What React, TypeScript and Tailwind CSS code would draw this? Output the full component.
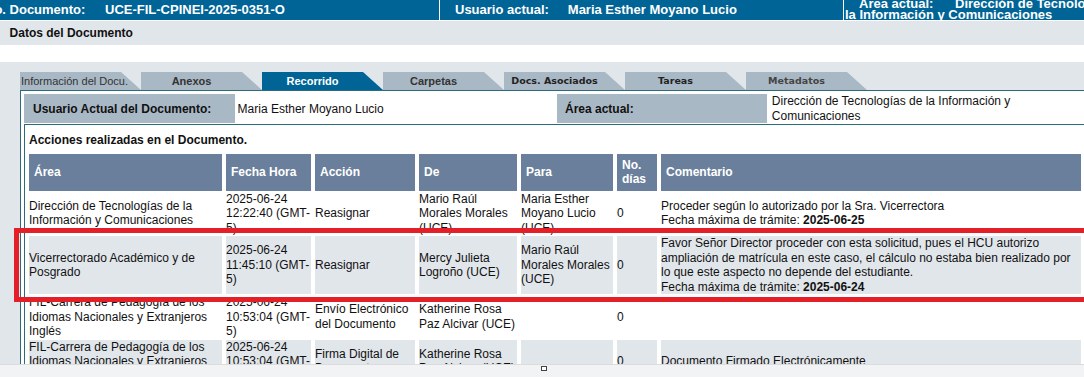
import React from 'react';

interface Accion {
  area: string;
  fecha: string;
  accion: string;
  de: string;
  para: string;
  dias: string;
  comentario?: string;
  fechaMax?: string;
  gris?: boolean;
}

const acciones: Accion[] = [
  {
    area: 'Dirección de Tecnologías de la Información y Comunicaciones',
    fecha: '2025-06-24 12:22:40 (GMT-5)',
    accion: 'Reasignar',
    de: 'Mario Raúl Morales Morales (UCE)',
    para: 'Maria Esther Moyano Lucio (UCE)',
    dias: '0',
    comentario: 'Proceder según lo autorizado por la Sra. Vicerrectora',
    fechaMax: '2025-06-25',
  },
  {
    area: 'Vicerrectorado Académico y de Posgrado',
    fecha: '2025-06-24 11:45:10 (GMT-5)',
    accion: 'Reasignar',
    de: 'Mercy Julieta Logroño (UCE)',
    para: 'Mario Raúl Morales Morales (UCE)',
    dias: '0',
    comentario:
      'Favor Señor Director proceder con esta solicitud, pues el HCU autorizo ampliación de matrícula en este caso, el cálculo no estaba bien realizado por lo que este aspecto no depende del estudiante.',
    fechaMax: '2025-06-24',
    gris: true,
  },
  {
    area: 'FIL-Carrera de Pedagogía de los Idiomas Nacionales y Extranjeros Inglés',
    fecha: '2025-06-24 10:53:04 (GMT-5)',
    accion: 'Envío Electrónico del Documento',
    de: 'Katherine Rosa Paz Alcivar (UCE)',
    para: '',
    dias: '0',
  },
  {
    area: 'FIL-Carrera de Pedagogía de los Idiomas Nacionales y Extranjeros Inglés',
    fecha: '2025-06-24 10:53:04 (GMT-5)',
    accion: 'Firma Digital de Documento',
    de: 'Katherine Rosa Paz Alcivar (UCE)',
    para: '',
    dias: '0',
    comentario: 'Documento Firmado Electrónicamente',
    gris: true,
  },
];

const tabs = [
  { label: 'Información del Docu.', kind: 'first' },
  { label: 'Anexos', kind: 'arial' },
  { label: 'Recorrido', kind: 'active' },
  { label: 'Carpetas', kind: 'arial' },
  { label: 'Docs. Asociados', kind: 'verdana' },
  { label: 'Tareas', kind: 'verdana' },
  { label: 'Metadatos', kind: 'muted' },
];

function Tab({ label, kind }: { label: string; kind: string }) {
  const bg = kind === 'active' ? 'bg-[#006496]' : 'bg-[#a9b8c5]';
  let text = 'w-[101px] text-center text-[11px] font-bold text-[#333]';
  if (kind === 'first') text = 'pl-[1px] text-[11px] text-[#333] whitespace-nowrap';
  if (kind === 'active') text = 'w-[101px] text-center text-[11px] font-bold text-white';
  if (kind === 'verdana') text = "w-[101px] text-center whitespace-nowrap font-['DejaVu_Sans',Verdana,sans-serif] text-[9.5px] font-bold text-[#222]";
  if (kind === 'muted') text = "w-[101px] text-center font-['DejaVu_Sans',Verdana,sans-serif] text-[9.5px] font-bold text-[#444]";

  return (
    <div className="relative flex h-[18px] w-[121px] shrink-0 items-center">
      {/* sloped tab shape */}
      <div className={`absolute inset-0 ${bg} [clip-path:polygon(0_0,101px_0,121px_100%,0_100%)]`} />
      <span className={`relative ${text}`}>{label}</span>
    </div>
  );
}

export default function App() {
  return (
    <div className="relative h-[377px] w-[1084px] overflow-hidden bg-white font-['Liberation_Sans',Arial,sans-serif] text-[12px] text-[#111]">
      {/* Top bar */}
      <div className="flex h-[21px] overflow-hidden border-b border-white bg-[#006496] text-[13px] font-bold text-white">
        <div className="flex w-[440px] shrink-0 items-center whitespace-nowrap border-r border-white">
          <span className="ml-[-15px] w-[120px] shrink-0">No. Documento:</span>
          <span>UCE-FIL-CPINEI-2025-0351-O</span>
        </div>
        <div className="flex w-[404px] shrink-0 items-center whitespace-nowrap border-r border-white pl-[15px]">
          <span className="w-[112.8px] shrink-0">Usuario actual:</span>
          <span>Maria Esther Moyano Lucio</span>
        </div>
        <div className="mt-[-2.5px] w-[293px] shrink-0 pl-[1px] leading-[11px]">
          <span className="inline-block w-[110px] pl-[14px]">Área actual:</span>
          Dirección de Tecnologías de la Información y Comunicaciones
        </div>
      </div>

      <div className="flex h-[24px] items-center bg-[#e1e6eb] pl-[9.6px] font-bold">Datos del Documento</div>
      <div className="h-[17px]" />

      {/* Tabs + panel */}
      <div className="bg-[#e1e6eb] pl-[20px] pt-[10px]">
        <div className="flex">
          {tabs.map((t) => (
            <Tab key={t.label} label={t.label} kind={t.kind} />
          ))}
        </div>

        <div className="border-l border-t border-[#2c6a7c] bg-white pl-[3px] pt-[3px]">
          {/* Usuario / Área */}
          <div className="flex h-[29px]">
            <div className="flex w-[211px] shrink-0 items-center bg-[#a9b8c5] pl-[9px] font-bold">Usuario Actual del Documento:</div>
            <div className="flex w-[322px] shrink-0 items-center pl-[2.6px]">Maria Esther Moyano Lucio</div>
            <div className="flex w-[210px] shrink-0 items-center bg-[#a9b8c5] pl-[8px] font-bold">Área actual:</div>
            <div className="flex w-[305px] shrink-0 items-center pl-[4.8px] leading-[14.5px]">
              Dirección de Tecnologías de la Información y Comunicaciones
            </div>
          </div>

          {/* Acciones */}
          <div className="mt-[1px] border-l border-t border-[#2c6a7c]">
            <div className="pb-[5px] pl-[4px] pt-[8px] font-bold leading-[14.5px]">Acciones realizadas en el Documento.</div>
            <table className="w-[1060px] table-fixed border-separate border-spacing-x-[4px] border-spacing-y-[1.5px] leading-[14.5px]">
              <colgroup>
                <col className="w-[193px]" />
                <col className="w-[85px]" />
                <col className="w-[100px]" />
                <col className="w-[98px]" />
                <col className="w-[92px]" />
                <col className="w-[40px]" />
                <col className="w-[420px]" />
              </colgroup>
              <thead>
                <tr>
                  {['Área', 'Fecha Hora', 'Acción', 'De', 'Para', 'No. días', 'Comentario'].map((h) => (
                    <th key={h} className="bg-[#6a7f9b] py-[4px] pl-[5px] text-left align-middle font-bold text-white">
                      {h}
                    </th>
                  ))}
                </tr>
              </thead>
              <tbody>
                {acciones.map((a, i) => {
                  const cell = `p-0 align-middle ${a.gris ? 'bg-[#e1e6eb]' : 'bg-white'}`;
                  return (
                    <tr key={i}>
                      <td className={cell}>{a.area}</td>
                      <td className={cell}>{a.fecha}</td>
                      <td className={cell}>{a.accion}</td>
                      <td className={cell}>{a.de}</td>
                      <td className={cell}>{a.para}</td>
                      <td className={cell}>{a.dias}</td>
                      <td className={cell}>
                        {a.comentario}
                        {a.fechaMax && (
                          <>
                            <br />
                            Fecha máxima de trámite: <b>{a.fechaMax}</b>
                          </>
                        )}
                      </td>
                    </tr>
                  );
                })}
              </tbody>
            </table>
          </div>
        </div>
      </div>

      {/* Red highlight drawn over the second row */}
      <div className="pointer-events-none absolute left-[14px] top-[228px] h-[74px] w-[1100px] border-[5px] border-[#e41f27]" />

      {/* Bottom strip */}
      <div className="absolute bottom-0 left-0 h-[13px] w-full border-t border-[#dcdcdc] bg-[#f2f3f4]">
        <div className="absolute left-[541px] top-[1px] h-[5px] w-[6px] border border-[#444] bg-white" />
      </div>
    </div>
  );
}
